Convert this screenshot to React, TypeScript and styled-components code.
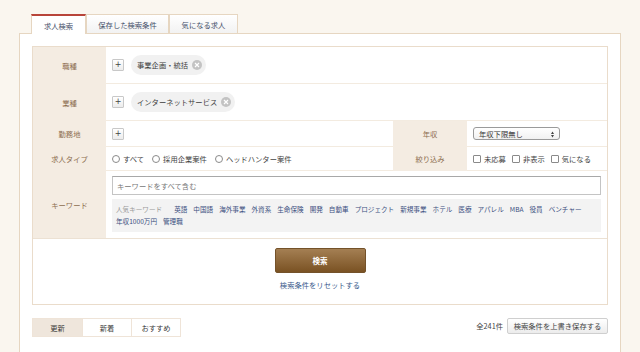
import React from 'react';
import styled, { createGlobalStyle } from 'styled-components';

const Global = createGlobalStyle`
  html, body { margin: 0; padding: 0; background: #faf6ef; }
  body {
    font-family: "Noto Sans CJK JP", "Noto Sans", sans-serif;
    font-size: 7.3px;
    color: #444;
  }
  * { box-sizing: border-box; }
`;

const Page = styled.div`
  width: 640px;
  height: 352px;
  overflow: hidden;
  padding: 14px 0 0 19px;
`;

const TabBar = styled.div`
  display: flex;
  padding-left: 12px;
  height: 19px;
  position: relative;
  z-index: 1;
`;

const Tab = styled.div<{ $active?: boolean; $w: number }>`
  width: ${(p) => p.$w}px;
  height: ${(p) => (p.$active ? 20 : 19)}px;
  display: flex;
  align-items: center;
  justify-content: center;
  border: 1px solid #e6d6c1;
  border-bottom: none;
  border-top: ${(p) => (p.$active ? '2px solid #b8453a' : '1px solid #e6d6c1')};
  background: ${(p) => (p.$active ? '#fff' : 'linear-gradient(#ffffff, #f2f2f2)')};
  color: #46506a;
  padding-top: 1px;
`;

const Panel = styled.div`
  width: 602px;
  height: 320px;
  background: #fff;
  border: 1px solid #e6d6c1;
  border-bottom: none;
  padding: 12px 12px 0;
`;

const Box = styled.div`
  border: 1px solid #eadccb;
`;

const Row = styled.div<{ $split?: boolean; $h: number }>`
  display: grid;
  grid-template-columns: ${(p) => (p.$split ? '73px 287px 74px 1fr' : '73px 1fr')};
  height: ${(p) => p.$h}px;
`;

const Label = styled.div`
  background: #f4ece2;
  color: #8c6d4f;
  display: flex;
  align-items: center;
  justify-content: center;
`;

const Value = styled.div`
  display: flex;
  align-items: center;
  padding-left: 6px;
  border-bottom: 1px solid #f3ebe0;
`;

const KeywordValue = styled.div`
  display: flex;
  flex-direction: column;
  gap: 4px;
  padding: 5px 6px 5px 6px;
`;

const PlusButton = styled.div`
  width: 12px;
  height: 12px;
  border: 1px solid #c8c8c8;
  border-radius: 1px;
  background: linear-gradient(#ffffff, #ececec);
  display: flex;
  align-items: center;
  justify-content: center;
  color: #444;
  font-family: "DejaVu Sans", sans-serif;
  font-size: 8px;
  line-height: 1;
`;

const Chip = styled.div`
  margin-left: 7px;
  height: 20px;
  border-radius: 10px;
  background: #f1f1f1;
  display: flex;
  align-items: center;
  gap: 4px;
  padding: 0 4px 0 6px;
  color: #3d3d3d;
`;

const ChipClose = styled.span`
  width: 10px;
  height: 10px;
  border-radius: 50%;
  background: #c3c3c3;
  display: flex;
  align-items: center;
  justify-content: center;
`;

const OptionGroup = styled.div<{ $gap: number }>`
  display: flex;
  align-items: center;
  gap: ${(p) => p.$gap}px;
`;

const Option = styled.label`
  display: flex;
  align-items: center;
  gap: 3px;
  color: #444;
`;

const RadioMark = styled.span`
  width: 8px;
  height: 8px;
  border: 1px solid #8a8a8a;
  border-radius: 50%;
  background: #fff;
`;

const CheckMark = styled.span`
  width: 8px;
  height: 8px;
  border: 1px solid #8a8a8a;
  border-radius: 1px;
  background: #fff;
`;

const SelectBox = styled.div`
  position: relative;
  width: 87px;
  height: 13px;
  border: 1px solid #9a9a9a;
  border-radius: 3px;
  background: linear-gradient(#ffffff, #f1f1f1);
  display: flex;
  align-items: center;
  padding-left: 5px;
  color: #333;
`;

const SelectArrows = styled.svg`
  position: absolute;
  right: 5px;
  top: 3px;
`;

const KeywordInput = styled.div`
  height: 19px;
  border: 1px solid #c4c4c4;
  border-top-color: #a8a8a8;
  display: flex;
  align-items: center;
  padding-left: 4px;
  color: #777;
`;

const KeywordBox = styled.div`
  background: #f3f3f3;
  padding: 4px 4px 5px;
  line-height: 12px;
  font-size: 6.6px;
  height: 33px;
`;

const KeywordTitle = styled.span`
  display: inline-block;
  color: #9a9a9a;
  margin-right: 12px;
  white-space: nowrap;
`;

const KeywordLink = styled.span`
  display: inline-block;
  color: #3b4f80;
  margin-right: 6px;
  white-space: nowrap;
`;

const ActionArea = styled.div`
  border-top: 1px solid #ece1d3;
  height: 66px;
  display: flex;
  flex-direction: column;
  align-items: center;
  padding-top: 9px;
`;

const SearchButton = styled.div`
  width: 91px;
  height: 25px;
  border: 1px solid #74522a;
  border-radius: 2px;
  background: linear-gradient(#a47f53, #7a5223);
  color: #fff;
  font-weight: bold;
  font-size: 7.5px;
  display: flex;
  align-items: center;
  justify-content: center;
`;

const ResetLink = styled.div`
  margin-top: 6px;
  line-height: 12px;
  color: #3b5a8c;
`;

const BottomBar = styled.div`
  margin-top: 13px;
  display: flex;
  justify-content: space-between;
  align-items: flex-start;
`;

const SortTabs = styled.div`
  display: flex;
  border: 1px solid #efe4d8;
`;

const SortTab = styled.div<{ $active?: boolean }>`
  width: 49px;
  height: 17px;
  display: flex;
  align-items: center;
  justify-content: center;
  background: ${(p) => (p.$active ? '#efe6dc' : '#fff')};
  border-left: 1px solid #efe4d8;
  color: #3a3a3a;
  &:first-child { border-left: none; }
`;

const RightTools = styled.div`
  display: flex;
  align-items: center;
  gap: 4px;
`;

const Count = styled.span`
  color: #444;
`;

const SaveButton = styled.div`
  width: 101px;
  height: 16px;
  border: 1px solid #cfcfcf;
  border-radius: 2px;
  background: linear-gradient(#ffffff, #ececec);
  display: flex;
  align-items: center;
  justify-content: center;
  color: #444;
`;

const CloseIcon = () => (
  <ChipClose>
    <svg width="6" height="6" viewBox="0 0 6 6">
      <path d="M1 1L5 5M5 1L1 5" stroke="#fff" strokeWidth="1.2" />
    </svg>
  </ChipClose>
);

const keywords = [
  '英語', '中国語', '海外事業', '外資系', '生命保険', '開発', '自動車', 'プロジェクト',
  '新規事業', 'ホテル', '医療', 'アパレル', 'MBA', '役員', 'ベンチャー', '年収1000万円', '管理職',
];

export default function App() {
  return (
    <Page>
      <Global />
      <TabBar>
        <Tab $active $w={55}>求人検索</Tab>
        <Tab $w={83}>保存した検索条件</Tab>
        <Tab $w={69}>気になる求人</Tab>
      </TabBar>
      <Panel>
        <Box>
          <Row $h={37}>
            <Label>職種</Label>
            <Value>
              <PlusButton>+</PlusButton>
              <Chip>事業企画・統括<CloseIcon /></Chip>
            </Value>
          </Row>
          <Row $h={37}>
            <Label>業種</Label>
            <Value>
              <PlusButton>+</PlusButton>
              <Chip>インターネットサービス<CloseIcon /></Chip>
            </Value>
          </Row>
          <Row $split $h={26}>
            <Label>勤務地</Label>
            <Value>
              <PlusButton>+</PlusButton>
            </Value>
            <Label>年収</Label>
            <Value>
              <SelectBox>
                年収下限無し
                <SelectArrows width="3" height="7" viewBox="0 0 3 7">
                  <path d="M0 3L1.5 0.5L3 3Z M0 4L1.5 6.5L3 4Z" fill="#444" />
                </SelectArrows>
              </SelectBox>
            </Value>
          </Row>
          <Row $split $h={24}>
            <Label>求人タイプ</Label>
            <Value>
              <OptionGroup $gap={8}>
                <Option><RadioMark />すべて</Option>
                <Option><RadioMark />採用企業案件</Option>
                <Option><RadioMark />ヘッドハンター案件</Option>
              </OptionGroup>
            </Value>
            <Label>絞り込み</Label>
            <Value>
              <OptionGroup $gap={6}>
                <Option><CheckMark />未応募</Option>
                <Option><CheckMark />非表示</Option>
                <Option><CheckMark />気になる</Option>
              </OptionGroup>
            </Value>
          </Row>
          <Row $h={67}>
            <Label>キーワード</Label>
            <KeywordValue>
              <KeywordInput>キーワードをすべて含む</KeywordInput>
              <KeywordBox>
                <KeywordTitle>人気キーワード</KeywordTitle>
                {keywords.map((k) => (
                  <KeywordLink key={k}>{k}</KeywordLink>
                ))}
              </KeywordBox>
            </KeywordValue>
          </Row>
          <ActionArea>
            <SearchButton>検索</SearchButton>
            <ResetLink>検索条件をリセットする</ResetLink>
          </ActionArea>
        </Box>
        <BottomBar>
          <SortTabs>
            <SortTab $active>更新</SortTab>
            <SortTab>新着</SortTab>
            <SortTab>おすすめ</SortTab>
          </SortTabs>
          <RightTools>
            <Count>全241件</Count>
            <SaveButton>検索条件を上書き保存する</SaveButton>
          </RightTools>
        </BottomBar>
      </Panel>
    </Page>
  );
}
